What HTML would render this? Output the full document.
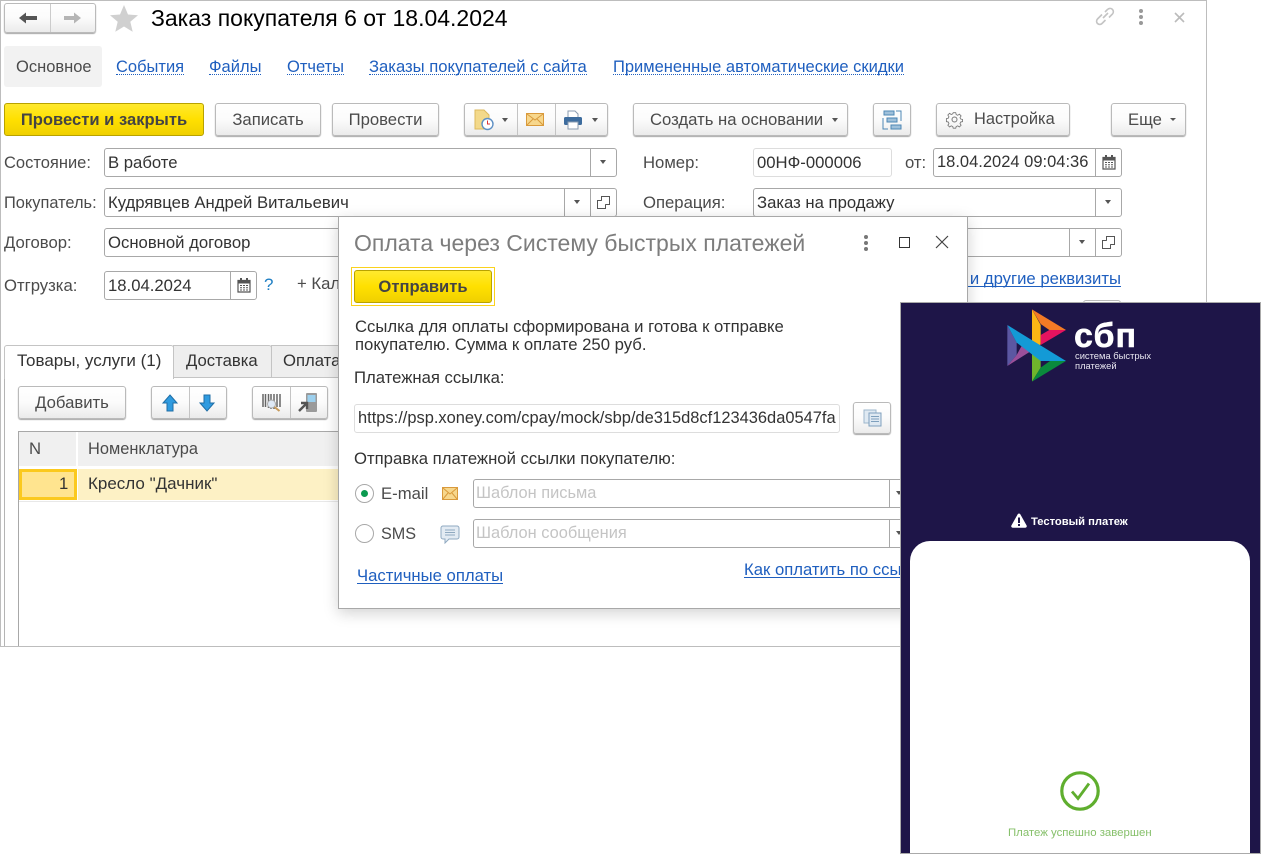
<!DOCTYPE html>
<html lang="ru"><head><meta charset="utf-8"><title>Заказ покупателя</title>
<style>
html,body{margin:0;padding:0;background:#fff}
body{position:relative;width:1262px;height:854px;overflow:hidden;font-family:"Liberation Sans",Arial,sans-serif;font-size:16.7px;color:#4b4b4b}
div,span,a,svg{position:absolute;box-sizing:border-box}
.t{white-space:nowrap;line-height:20px;margin-top:2px}
.d{color:#333}
.l{color:#1f5fbf;border-bottom:1px dotted #1f5fbf;padding-top:4px;line-height:14px;white-space:nowrap;text-decoration:none;font-size:16.5px}
.u{color:#1f5fbf;border-bottom:1px solid #1f5fbf;padding-top:3px;line-height:15px;white-space:nowrap;text-decoration:none}
.b{border:1px solid #bababa;border-radius:3px;background:linear-gradient(#fff,#fbfbfb 50%,#ebebeb);box-shadow:0 1px 1px #a6a6a6;text-align:center;line-height:31px;color:#4b4b4b;white-space:nowrap}
.y{border:1px solid #b8a200;border-radius:3px;background:linear-gradient(#ffe92e,#ffe000 50%,#f0d000);text-align:center;font-weight:bold;color:#444;line-height:32px;white-space:nowrap;font-size:16.6px}
.f{border:1px solid #a8a8a8;border-radius:3px;background:#fff;height:29px;line-height:27px;padding-left:3px;color:#333;white-space:nowrap;overflow:hidden}
.v{width:1px;background:#a8a8a8}
.a{width:0;height:0;border-left:3.5px solid transparent;border-right:3.5px solid transparent;border-top:4px solid #555}
</style></head><body>

<!-- main window -->
<div style="left:0;top:0;width:1207px;height:647px;border:1px solid #bdbdbd"></div>

<div class="b" style="left:4px;top:3px;width:92px;height:30px"></div>
<div class="v" style="left:50px;top:4px;height:28px;background:#ccc"></div>
<svg style="left:18px;top:11px" width="64" height="14" viewBox="0 0 64 14"><path d="M1 7l7-5.500v3.500h11v4H8v3.500z" fill="#555"/><path d="M46 5h10V1.500L63 7l-7 5.500V9H46z" fill="#b5b5b5"/></svg>
<svg style="left:109px;top:4px" width="30" height="29" viewBox="0 0 30 29"><path d="M15 1l4 9.500 10 .8-7.700 6.500 2.400 10L15 22.500 6.300 27.800l2.400-10L1 11.300l10-.8z" fill="#d0d0d0"/></svg>
<div class="t" style="left:151px;top:5px;margin:0;font-size:23px;line-height:26px;color:#000">Заказ покупателя 6 от 18.04.2024</div>
<svg style="left:1094px;top:7px" width="22" height="20" viewBox="0 0 22 20" fill="none" stroke="#c4c4c4" stroke-width="1.600"><path d="M9 11l5-5M8 7.500L3.500 12a3 3 0 0 0 4.500 4.500l3.500-3.500M11 5l2.500-2.500a3 3 0 0 1 5 4.500L15 10.500"/></svg>
<svg style="left:1137px;top:8px" width="8" height="18" viewBox="0 0 8 18" fill="#999"><circle cx="4" cy="3" r="2"/><circle cx="4" cy="9" r="2"/><circle cx="4" cy="15" r="2"/></svg>
<svg style="left:1174px;top:12px" width="11" height="11" viewBox="0 0 11 11" stroke="#bbb" stroke-width="1.600"><path d="M1 1l9 9M10 1l-9 9"/></svg>

<div style="left:4px;top:46px;width:98px;height:41px;background:#f2f2f2;border-radius:3px"></div>
<div class="t" style="left:16px;top:55px;font-size:16.500px">Основное</div>
<a class="l" style="left:116px;top:56px">События</a>
<a class="l" style="left:209px;top:56px">Файлы</a>
<a class="l" style="left:287px;top:56px">Отчеты</a>
<a class="l" style="left:369px;top:56px;font-size:16.650px">Заказы покупателей с сайта</a>
<a class="l" style="left:613px;top:56px">Примененные автоматические скидки</a>

<div class="y" style="left:4px;top:103px;width:200px;height:33px">Провести и закрыть</div>
<div class="b" style="left:215px;top:103px;width:106px;height:33px">Записать</div>
<div class="b" style="left:332px;top:103px;width:107px;height:33px">Провести</div>
<div class="b" style="left:464px;top:103px;width:144px;height:33px"></div>
<div class="v" style="left:517px;top:104px;height:31px;background:#c4c4c4"></div>
<div class="v" style="left:555px;top:104px;height:31px;background:#c4c4c4"></div>
<svg style="left:474px;top:109px" width="21" height="22" viewBox="0 0 21 22"><path d="M1 1h9l5 5v14H1z" fill="#f3d98a" stroke="#dcb95c"/><circle cx="13.500" cy="15" r="5.500" fill="#fff" stroke="#5d8fc4" stroke-width="1.400"/><path d="M13.500 11.500V15h2.500" stroke="#d33" fill="none"/></svg>
<div class="a" style="left:502px;top:118px"></div>
<svg style="left:526px;top:113px" width="18" height="13" viewBox="0 0 18 13"><rect x=".5" y=".5" width="17" height="12" fill="#f7d78c" stroke="#d99a3c"/><path d="M1 1l8 6 8-6M1 12l6-6M17 12l-6-6" fill="none" stroke="#d99a3c"/></svg>
<svg style="left:563px;top:110px" width="20" height="20" viewBox="0 0 20 20"><path d="M5 1h7l3 3v4H5z" fill="#fff" stroke="#8a9bb0"/><rect x="1" y="7" width="18" height="8" rx="1.500" fill="#3d6c9e"/><rect x="5" y="12" width="10" height="7" fill="#fff" stroke="#8a9bb0"/></svg>
<div class="a" style="left:592px;top:118px"></div>
<div class="b" style="left:633px;top:103px;width:215px;height:33px;text-align:left;padding-left:16px">Создать на основании</div>
<div class="a" style="left:832px;top:118px"></div>
<div class="b" style="left:873px;top:103px;width:38px;height:33px"></div>
<svg style="left:882px;top:110px" width="20" height="20" viewBox="0 0 20 20"><g fill="#9fc0da" stroke="#4d87b5"><rect x="2" y="1" width="10" height="4"/><rect x="5" y="8" width="10" height="4"/><rect x="9" y="15" width="10" height="4"/></g><path d="M1 8v11h5M14 1h5v10" fill="none" stroke="#4d87b5"/></svg>
<div class="b" style="left:936px;top:103px;width:134px;height:33px;text-align:left;padding-left:37px;font-size:16.400px">Настройка</div>
<svg style="left:945px;top:110px" width="19" height="19" viewBox="0 0 19 19" fill="none" stroke="#777"><circle cx="9.500" cy="9.500" r="2.500"/><path d="M8 1.500h3l.5 2.300 1.800.8 2-1.300 2 2-1.300 2 .8 1.700 2.200.5v2.500l-2.200.5-.8 1.800 1.300 2-2 2-2-1.300-1.800.8-.5 2H8l-.5-2-1.800-.8-2 1.300-2-2 1.300-2-.8-1.800-2.200-.5V8.500l2.200-.5.800-1.700-1.300-2 2-2 2 1.300 1.800-.8z" transform="translate(1.400 1.400) scale(.85)"/></svg>
<div class="b" style="left:1111px;top:103px;width:75px;height:33px;text-align:left;padding-left:16px">Еще</div>
<div class="a" style="left:1170px;top:118px;border-left-width:3px;border-right-width:3px;border-top-width:3px"></div>

<div class="t" style="left:4px;top:151px;font-size:16.500px">Состояние:</div>
<div class="f" style="left:104px;top:148px;width:513px">В работе</div>
<div class="v" style="left:590px;top:149px;height:27px"></div><div class="a" style="left:600px;top:160px"></div>
<div class="t" style="left:643px;top:151px">Номер:</div>
<div class="f" style="left:753px;top:148px;width:139px;border-color:#ddd">00НФ-000006</div>
<div class="t" style="left:905px;top:151px">от:</div>
<div class="f" style="left:933px;top:148px;width:189px;font-size:16.500px">18.04.2024 09:04:36</div>
<div class="v" style="left:1095px;top:149px;height:27px"></div>
<svg style="left:1102px;top:155px" width="14" height="15" viewBox="0 0 14 15"><path d="M1 2.500h12V14H1z" fill="#fff" stroke="#555" stroke-width="1.200"/><rect x="1" y="2" width="12" height="3.500" fill="#555"/><rect x="3" y="0" width="2" height="3" fill="#555"/><rect x="9" y="0" width="2" height="3" fill="#555"/><path d="M3 7.500h8M3 9.800h8M3 12h8" stroke="#555" stroke-dasharray="2 1"/></svg>

<div class="t" style="left:4px;top:191px;font-size:16.400px">Покупатель:</div>
<div class="f" style="left:104px;top:188px;width:513px">Кудрявцев Андрей Витальевич</div>
<div class="v" style="left:564px;top:189px;height:27px"></div><div class="a" style="left:574px;top:200px"></div>
<div class="v" style="left:590px;top:189px;height:27px"></div>
<svg style="left:597px;top:196px" width="13" height="13" viewBox="0 0 13 13" fill="#fff" stroke="#555"><rect x="4.500" y=".5" width="8" height="8"/><path d="M4.500 4.500h-4v8h8v-4"/></svg>
<div class="t" style="left:643px;top:191px">Операция:</div>
<div class="f" style="left:753px;top:188px;width:369px">Заказ на продажу</div>
<div class="v" style="left:1095px;top:189px;height:27px"></div><div class="a" style="left:1105px;top:200px"></div>

<div class="t" style="left:4px;top:231px">Договор:</div>
<div class="f" style="left:104px;top:228px;width:300px">Основной договор</div>
<div class="f" style="left:900px;top:228px;width:222px"></div>
<div class="v" style="left:1069px;top:229px;height:27px"></div><div class="a" style="left:1079px;top:240px"></div>
<div class="v" style="left:1095px;top:229px;height:27px"></div>
<svg style="left:1102px;top:236px" width="13" height="13" viewBox="0 0 13 13" fill="#fff" stroke="#555"><rect x="4.500" y=".5" width="8" height="8"/><path d="M4.500 4.500h-4v8h8v-4"/></svg>

<a class="u" style="left:900px;top:268px;width:221px;text-align:right">и другие реквизиты</a>
<div class="b" style="left:1083px;top:300px;width:38px;height:20px"></div>

<div class="t" style="left:4px;top:274px">Отгрузка:</div>
<div class="f" style="left:104px;top:271px;width:153px">18.04.2024</div>
<div class="v" style="left:230px;top:272px;height:27px"></div>
<svg style="left:237px;top:278px" width="14" height="15" viewBox="0 0 14 15"><path d="M1 2.500h12V14H1z" fill="#fff" stroke="#555" stroke-width="1.200"/><rect x="1" y="2" width="12" height="3.500" fill="#555"/><rect x="3" y="0" width="2" height="3" fill="#555"/><rect x="9" y="0" width="2" height="3" fill="#555"/><path d="M3 7.500h8M3 9.800h8M3 12h8" stroke="#555" stroke-dasharray="2 1"/></svg>
<div class="t" style="left:264px;top:273px;color:#1f7fc4;font-size:17px">?</div>
<div class="t" style="left:297px;top:272px">+ Калькулятор</div>

<!-- tabs -->
<div style="left:4px;top:377px;width:1202px;height:269px;border-left:1px solid #b4b4b4;border-top:1px solid #b4b4b4"></div>
<div style="left:173px;top:345px;width:99px;height:33px;background:#eee;border:1px solid #c4c4c4;border-radius:0 3px 0 0"></div>
<div style="left:271px;top:345px;width:120px;height:33px;background:#eee;border:1px solid #c4c4c4;border-radius:0 3px 0 0"></div>
<div style="left:4px;top:345px;width:170px;height:34px;background:#fff;border:1px solid #c4c4c4;border-bottom:0;border-radius:3px 3px 0 0"></div>
<div class="t d" style="left:17px;top:349px;font-size:17px">Товары, услуги (1)</div>
<div class="t d" style="left:186px;top:349px">Доставка</div>
<div class="t d" style="left:283px;top:349px">Оплата</div>

<div class="b" style="left:18px;top:386px;width:108px;height:33px">Добавить</div>
<div class="b" style="left:151px;top:386px;width:76px;height:33px"></div>
<div class="v" style="left:189px;top:387px;height:31px;background:#c4c4c4"></div>
<svg style="left:162px;top:394px" width="54" height="18" viewBox="0 0 54 18"><path d="M8 1l7 8h-4v8H5V9H1z" fill="#2f9be0" stroke="#1f6ea6"/><path d="M42 1h6v8h4l-7 8-7-8h4z" fill="#2f9be0" stroke="#1f6ea6" transform="translate(0 0)"/></svg>
<div class="b" style="left:252px;top:386px;width:76px;height:33px"></div>
<div class="v" style="left:290px;top:387px;height:31px;background:#c4c4c4"></div>
<svg style="left:262px;top:393px" width="58" height="20" viewBox="0 0 58 20"><path d="M1 1v13M3.500 1v13M6.500 1v14M9 1v15M12 1v15M15 1v13M18 1v13" stroke="#666" stroke-width="1.500"/><circle cx="9.500" cy="11" r="4" fill="#dfe9f5" stroke="#aaa"/><path d="M12.500 14l5 4" stroke="#c79a5a" stroke-width="2"/><rect x="44" y="0" width="11" height="19" rx="1" fill="#9a9a9a"/><rect x="45.500" y="2" width="8" height="7" fill="#9cd0ee"/><path d="M37 18l7-7M39 10h6v6" stroke="#555" stroke-width="2.400" fill="none"/></svg>

<!-- table -->
<div style="left:18px;top:431px;width:1100px;height:215px;border-left:1px solid #a8a8a8;border-top:1px solid #a8a8a8"></div>
<div style="left:19px;top:432px;width:57px;height:34px;background:#f0f0f0"></div>
<div style="left:78px;top:432px;width:300px;height:34px;background:#f0f0f0"></div>
<div class="t" style="left:29px;top:437px">N</div>
<div class="t" style="left:88px;top:437px;font-size:16.400px">Номенклатура</div>
<div style="left:78px;top:469px;width:300px;height:31px;background:#fdf1c5"></div>
<div style="left:19px;top:469px;width:58px;height:31px;background:#ffe48f;border:3px solid #fbc91e"></div>
<div class="t d" style="left:59px;top:472px">1</div>
<div class="t d" style="left:88px;top:472px;font-size:17px">Кресло "Дачник"</div>
<div style="left:19px;top:501px;width:360px;height:1px;background:#e8e8e8"></div>

<!-- dialog -->
<div style="left:338px;top:216px;width:630px;height:393px;background:#fff;border:1px solid #a8a8a8;box-shadow:0 4px 14px rgba(0,0,0,.18)"></div>
<div class="t" style="left:354px;top:230px;margin:0;font-size:23px;line-height:26px;color:#7d7d7d">Оплата через Систему быстрых платежей</div>
<svg style="left:862px;top:234px" width="8" height="18" viewBox="0 0 8 18" fill="#777"><circle cx="4" cy="3" r="2"/><circle cx="4" cy="9" r="2"/><circle cx="4" cy="15" r="2"/></svg>
<svg style="left:899px;top:237px" width="11" height="11" viewBox="0 0 11 11" fill="none" stroke="#333"><rect x=".5" y=".5" width="10" height="10"/></svg>
<svg style="left:935px;top:235px" width="14" height="14" viewBox="0 0 14 14" stroke="#444" stroke-width="1.200"><path d="M1 1l12 12M13 1L1 13"/></svg>
<div style="left:351px;top:267px;width:144px;height:39px;border:1px solid #fad21e"></div>
<div class="y" style="left:354px;top:270px;width:138px;height:33px">Отправить</div>
<div class="t d" style="left:355px;top:316px;line-height:18px;white-space:normal;width:480px">Ссылка для оплаты сформирована и готова к отправке<br>покупателю. Сумма к оплате 250 руб.</div>
<div class="t d" style="left:354px;top:366px">Платежная ссылка:</div>
<div class="f" style="left:354px;top:404px;width:486px;border-color:#ddd;font-size:16.450px">https://psp.xoney.com/cpay/mock/sbp/de315d8cf123436da0547fa</div>
<div class="b" style="left:853px;top:402px;width:38px;height:32px"></div>
<svg style="left:863px;top:409px" width="19" height="18" viewBox="0 0 19 18"><rect x="1" y="1" width="12" height="13" fill="#dfe9f2" stroke="#9db6cc"/><rect x="6" y="4" width="12" height="13" fill="#dfe9f2" stroke="#7fa0bd"/><path d="M8 7.500h8M8 10h8M8 12.500h8" stroke="#7fa0bd"/></svg>
<div class="t d" style="left:354px;top:447px">Отправка платежной ссылки покупателю:</div>
<div style="left:355px;top:484px;width:19px;height:19px;border:1px solid #a8a8a8;border-radius:50%"></div>
<div style="left:361px;top:490px;width:7px;height:7px;background:#0a9a50;border-radius:50%"></div>
<div class="t" style="left:381px;top:482px">E-mail</div>
<svg style="left:442px;top:487px" width="16" height="13" viewBox="0 0 16 13"><rect x=".5" y=".5" width="15" height="12" fill="#f7d78c" stroke="#d99a3c"/><path d="M1 1l7 6 7-6M1 12l5-6M15 12l-5-6" fill="none" stroke="#d99a3c"/></svg>
<div class="f" style="left:473px;top:479px;width:440px;color:#c4c4c4;font-size:16.400px;padding-left:2px">Шаблон письма</div>
<div class="v" style="left:889px;top:480px;height:27px"></div>
<div class="a" style="left:896px;top:491px"></div>
<div style="left:355px;top:524px;width:19px;height:19px;border:1px solid #a8a8a8;border-radius:50%"></div>
<div class="t" style="left:381px;top:522px;font-size:16.200px">SMS</div>
<svg style="left:440px;top:525px" width="20" height="19" viewBox="0 0 20 19"><path d="M3 1h14a2 2 0 0 1 2 2v9a2 2 0 0 1-2 2H9l-4 4v-4H3a2 2 0 0 1-2-2V3a2 2 0 0 1 2-2z" fill="#e3ebf3" stroke="#8fa9c0"/><path d="M5 5h10M5 7.500h10M5 10h10" stroke="#8fa9c0"/></svg>
<div class="f" style="left:473px;top:519px;width:440px;color:#c4c4c4;font-size:16.400px;padding-left:2px">Шаблон сообщения</div>
<div class="v" style="left:889px;top:520px;height:27px"></div>
<div class="a" style="left:896px;top:531px"></div>
<a class="u" style="left:357px;top:565px">Частичные оплаты</a>
<a class="u" style="left:744px;top:559px">Как оплатить по ссылке</a>

<!-- SBP panel -->
<div style="left:900px;top:302px;width:361px;height:552px;background:#1e1548;border:1px solid #aaa;overflow:hidden">
<div style="left:9px;top:238px;width:340px;height:330px;background:#fff;border-radius:20px 20px 0 0"></div>
</div>
<svg style="left:997px;top:303px" width="80" height="85" viewBox="21 9 240 255">
<path d="M52 75l28 53v37l-28 33z" fill="#5b57a2"/>
<path d="M52 198l73-46-28-18-17 31z" fill="#9a4f9a"/>
<path d="M126 28l26 47v58l-26 18z" fill="#fbb615"/>
<path d="M126 28l102 62h-50l-26-18z" fill="#f37a25"/>
<path d="M228 90l-76 45v-30l26-15z" fill="#e5135f"/>
<path d="M126 245v-87l26 20v25z" fill="#6fb52c"/>
<path d="M126 245l26-42 28-20h48z" fill="#0a8a3c"/>
<path d="M52 75l176 108h-76l-72-55z" fill="#139ad6"/>
</svg>
<div class="t" style="left:1074px;top:318px;margin:0;font-size:34px;line-height:36px;font-weight:bold;color:#fff;letter-spacing:1px;-webkit-text-stroke:.5px #fff">сбп</div>
<div class="t" style="left:1075px;top:351px;margin:0;font-size:9.400px;line-height:10px;color:#e8e6f0">система быстрых</div>
<div class="t" style="left:1075px;top:361px;margin:0;font-size:9.400px;line-height:10px;color:#e8e6f0">платежей</div>
<svg style="left:1011px;top:513px" width="16" height="15" viewBox="0 0 16 15"><path d="M8 .5a1.500 1.500 0 0 1 1.300.8l6.300 11.200a1.500 1.500 0 0 1-1.300 2.200H1.700a1.500 1.500 0 0 1-1.300-2.200L6.700 1.300A1.500 1.500 0 0 1 8 .5z" fill="#fff"/><rect x="7" y="4.500" width="2" height="5.500" fill="#1e1548"/><rect x="7" y="11" width="2" height="2" fill="#1e1548"/></svg>
<div class="t" style="left:1031px;top:510px;font-size:11.200px;font-weight:bold;color:#fff">Тестовый платеж</div>
<svg style="left:1060px;top:771px" width="40" height="40" viewBox="0 0 40 40" fill="none" stroke="#5fae2e"><circle cx="20" cy="20" r="18.200" stroke-width="3.200"/><path d="M12 20.500l6 7 11-15" stroke-width="2.800"/></svg>
<div class="t" style="left:1008px;top:821px;font-size:11.400px;color:#86c06a">Платеж успешно завершен</div>
</body></html>
